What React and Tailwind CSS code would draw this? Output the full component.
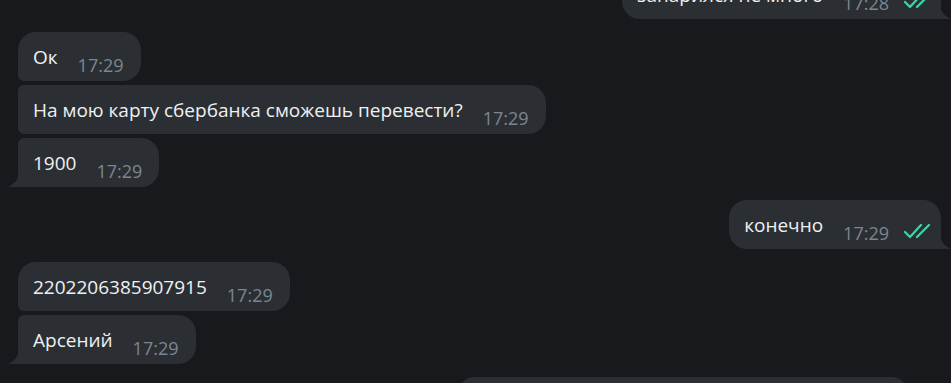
const Tail = ({ side }) =>
  side === "left" ? (
    <svg className="absolute bottom-0 left-[-10px]" width="11" height="16" viewBox="0 0 11 16">
      <path d="M11 0 C11 9 6 13 0 16 L11 16 Z" fill="#2b2f33" />
    </svg>
  ) : (
    <svg className="absolute bottom-0 right-[-10px]" width="11" height="16" viewBox="0 0 11 16">
      <path d="M0 0 C0 9 5 13 11 16 L0 16 Z" fill="#2b2f33" />
    </svg>
  );

const Checks = () => (
  <svg width="27" height="18" viewBox="0 0 27 18" className="ml-[15px] mt-[22px] shrink-0">
    <path d="M1 10 L6 15 L17 3" fill="none" stroke="#3dd3a8" strokeWidth="2.3" strokeLinecap="round" strokeLinejoin="round" />
    <path d="M13 15 L25 3" fill="none" stroke="#3dd3a8" strokeWidth="2.3" strokeLinecap="round" />
  </svg>
);

const Bubble = ({ text, time, out, radius, tail }) => (
  <div className={"relative flex h-[49px] bg-[#2b2f33] pl-[15px] " + (out ? "pr-[10px] " : "pr-[17px] ") + radius}>
    <span className="pt-[12px] text-[19px] leading-[26px] text-[#eef1f3] whitespace-nowrap">{text}</span>
    <span className="ml-[20px] pt-[21px] text-[18px] leading-[24px] text-[#7b8690] whitespace-nowrap">{time}</span>
    {out && <Checks />}
    {tail && <Tail side={out ? "right" : "left"} />}
  </div>
);

export default function App() {
  return (
    <div className="h-[383px] w-full overflow-hidden bg-[#17191d] font-['Open_Sans',sans-serif]">
      <div className="flex flex-col">
        <div className="mt-[-30px] flex justify-end pr-[10px]">
          <Bubble text="запарился не много" time="17:28" out tail radius="rounded-[18px] rounded-br-none" />
        </div>

        <div className="mt-[13px] flex flex-col items-start gap-[4px] pl-[18px]">
          <Bubble text="Ок" time="17:29" radius="rounded-[18px] rounded-bl-[6px]" />
          <Bubble text="На мою карту сбербанка сможешь перевести?" time="17:29" radius="rounded-[18px] rounded-tl-[6px] rounded-bl-[6px]" />
          <Bubble text="1900" time="17:29" tail radius="rounded-[18px] rounded-tl-[6px] rounded-bl-none" />
        </div>

        <div className="mt-[13px] flex justify-end pr-[10px]">
          <Bubble text="конечно" time="17:29" out tail radius="rounded-[18px] rounded-br-none" />
        </div>

        <div className="mt-[13px] flex flex-col items-start gap-[4px] pl-[18px]">
          <Bubble text="2202206385907915" time="17:29" radius="rounded-[18px] rounded-bl-[6px]" />
          <Bubble text="Арсений" time="17:29" tail radius="rounded-[18px] rounded-tl-[6px] rounded-bl-none" />
        </div>

        <div className="mt-[13px] flex justify-end pr-[42px]">
          <div className="h-[49px] w-[452px] rounded-[18px] bg-[#2b2f33]" />
        </div>
      </div>
    </div>
  );
}
